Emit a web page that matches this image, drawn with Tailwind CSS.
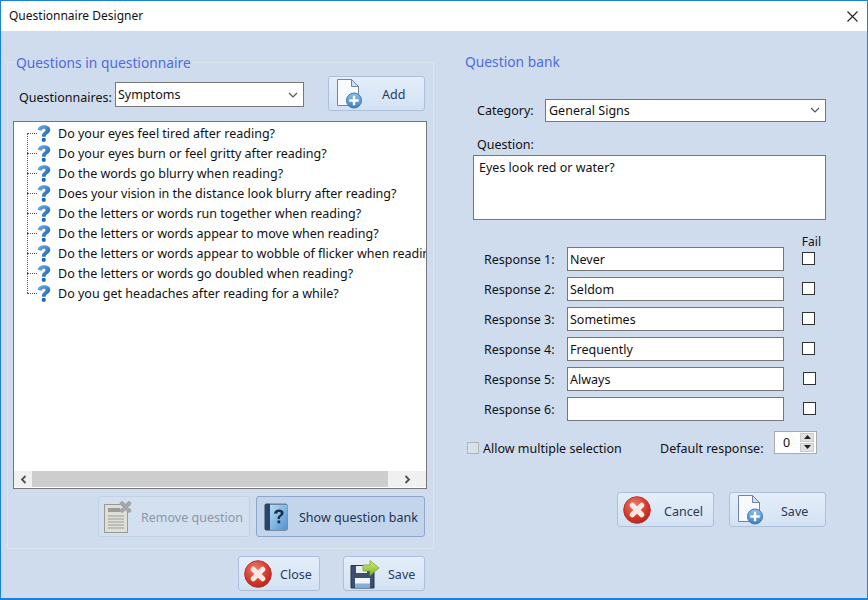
<!DOCTYPE html>
<html>
<head>
<meta charset="utf-8">
<title>Questionnaire Designer</title>
<script src="https://cdn.jsdelivr.net/npm/@tailwindcss/browser@4"></script>
</head>
<body class="m-0 overflow-hidden">
<!-- shared icons -->
<svg width="0" height="0" class="absolute">
  <defs>
    <linearGradient id="qblue" x1="0" y1="0" x2="1" y2="1"><stop offset="0" stop-color="#6fb0e6"/><stop offset="1" stop-color="#1b5fae"/></linearGradient>
    <radialGradient id="redball" cx="0.4" cy="0.3" r="0.8"><stop offset="0" stop-color="#ee7a68"/><stop offset="0.6" stop-color="#d2392c"/><stop offset="1" stop-color="#a92419"/></radialGradient>
    <linearGradient id="plusblue" x1="0" y1="0" x2="0" y2="1"><stop offset="0" stop-color="#8fc0ea"/><stop offset="1" stop-color="#3c7fc2"/></linearGradient>
    <linearGradient id="bookblue" x1="0" y1="0" x2="1" y2="1"><stop offset="0" stop-color="#b7daf5"/><stop offset="1" stop-color="#4d92cf"/></linearGradient>
    <linearGradient id="arrowgreen" x1="0" y1="0" x2="0" y2="1"><stop offset="0" stop-color="#d5ec7c"/><stop offset="1" stop-color="#7fb52a"/></linearGradient>
    <symbol id="q" viewBox="0 0 14 17">
      <path d="M.6 4.800C1.200 1.700 3.900.3 7 .3c3.400 0 6.300 1.600 6.300 4.500 0 2.200-1.500 3.300-3 4.300-1.100.8-1.600 1.300-1.600 2.600H4.900c-.1-2.300.6-3.400 2-4.500 1-.8 1.600-1.300 1.600-2.100 0-.9-.7-1.400-1.700-1.400-1.200 0-1.900.7-2.100 2z" fill="url(#qblue)"/>
      <rect x="4.800" y="12.900" width="3.900" height="3.800" rx="1.100" fill="#1f66b5"/>
    </symbol>
    <symbol id="newfile" viewBox="0 0 27 30">
      <path d="M1.500.5H15.500L22.500 7.500V26.500H1.500z" fill="#f7faff" stroke="#6f83ad"/>
      <path d="M15.500.5V7.500H22.500z" fill="#d3deee" stroke="#6f83ad"/>
      <circle cx="18" cy="21.500" r="7.500" fill="url(#plusblue)" stroke="#3f74ad"/>
      <path d="M18 16.800v9.400M13.300 21.500h9.400" stroke="#fff" stroke-width="2.400"/>
    </symbol>
    <symbol id="cancel" viewBox="0 0 30 30">
      <circle cx="15" cy="15" r="14.300" fill="url(#redball)" stroke="#b5352b"/>
      <path d="M10 10l10 10M20 10L10 20" stroke="#f8e8e4" stroke-width="5.600" stroke-linecap="round"/>
    </symbol>
    <symbol id="floppy" viewBox="0 0 30 30">
      <path d="M1 6.500H20L24 10V29H1z" fill="#3d4f6e" stroke="#26344c"/>
      <rect x="6" y="7" width="11" height="7" fill="#e8edf3"/>
      <rect x="5" y="19" width="15" height="9.500" fill="#f0f4f8"/>
      <rect x="5" y="24.500" width="15" height="4" fill="#7eb0dc"/>
      <path d="M13 6H20V1.500L29 9 20 16.500V12H13z" fill="url(#arrowgreen)" stroke="#7aa52e" stroke-width=".8"/>
    </symbol>
  </defs>
</svg>

<div class="w-[868px] h-[600px] flex flex-col bg-[#cfdcee] border-x border-b-2 border-[#1a82dc] text-[12.5px] leading-none text-[#111] font-['Noto_Sans','Open_Sans',sans-serif]">
  <!-- title bar -->
  <div class="h-[31px] shrink-0 bg-white flex items-center justify-between pl-[8px] pr-[9px] border-t border-[#1a82dc]">
    <span class="text-[#111] text-[12px]">Questionnaire Designer</span>
    <svg width="11" height="11" viewBox="0 0 11 11"><path d="M.5.500l10 10M10.500.500l-10 10" stroke="#222" stroke-width="1.100"/></svg>
  </div>

  <div class="flex flex-1 min-h-0">
    <!-- left side -->
    <div class="w-[439px] shrink-0 pl-[6px] pr-[15px] pt-[31px]">
      <div class="relative w-[427px] h-[487px] border border-[#dbe3ec] pt-[13px] pl-[5px] pr-[6px]">
        <span class="absolute left-[7px] -top-[7px] px-[1px] bg-[#cfdcee] text-[13.8px] text-[#4f6bd8]">Questions in questionnaire</span>
        <div class="flex items-start pl-[6px]">
          <span class="mt-[16px] w-[96px]">Questionnaires:</span>
          <div class="mt-[6px] w-[189px] h-[25px] bg-white border border-[#777] flex items-center justify-between pl-[2px] pr-[5px]">
            <span class="mt-[2px]">Symptoms</span>
            <svg width="10" height="6" viewBox="0 0 10 6"><path d="M1 1l4 4 4-4" fill="none" stroke="#555" stroke-width="1.200"/></svg>
          </div>
          <button class="ml-[24px] w-[97px] h-[35px] rounded-[3px] border border-[#aebfd9] bg-linear-to-b from-[#e4eefa] to-[#d3e2f3] flex items-center pl-[7px] text-[#2b3a5a]">
            <svg width="27" height="30"><use href="#newfile"/></svg>
            <span class="ml-[19px] mt-[4px]">Add</span>
          </button>
        </div>

        <!-- question tree -->
        <div class="relative mt-[10px] h-[368px] bg-white border border-[#777] overflow-hidden">
          <div class="relative pt-[1px] pl-[13px] h-[349px] overflow-hidden">
            <div class="absolute left-[13px] top-[11px] h-[160px] border-l border-dotted border-[#555]"></div>
            <ul class="whitespace-nowrap">
              <li class="flex items-center h-[20px]"><i class="shrink-0 w-[10px] border-t border-dotted border-[#555]"></i><svg class="shrink-0" width="14" height="17"><use href="#q"/></svg><span class="ml-[7px] mt-[2px]">Do your eyes feel tired after reading?</span></li>
              <li class="flex items-center h-[20px]"><i class="shrink-0 w-[10px] border-t border-dotted border-[#555]"></i><svg class="shrink-0" width="14" height="17"><use href="#q"/></svg><span class="ml-[7px] mt-[2px]">Do your eyes burn or feel gritty after reading?</span></li>
              <li class="flex items-center h-[20px]"><i class="shrink-0 w-[10px] border-t border-dotted border-[#555]"></i><svg class="shrink-0" width="14" height="17"><use href="#q"/></svg><span class="ml-[7px] mt-[2px]">Do the words go blurry when reading?</span></li>
              <li class="flex items-center h-[20px]"><i class="shrink-0 w-[10px] border-t border-dotted border-[#555]"></i><svg class="shrink-0" width="14" height="17"><use href="#q"/></svg><span class="ml-[7px] mt-[2px]">Does your vision in the distance look blurry after reading?</span></li>
              <li class="flex items-center h-[20px]"><i class="shrink-0 w-[10px] border-t border-dotted border-[#555]"></i><svg class="shrink-0" width="14" height="17"><use href="#q"/></svg><span class="ml-[7px] mt-[2px]">Do the letters or words run together when reading?</span></li>
              <li class="flex items-center h-[20px]"><i class="shrink-0 w-[10px] border-t border-dotted border-[#555]"></i><svg class="shrink-0" width="14" height="17"><use href="#q"/></svg><span class="ml-[7px] mt-[2px]">Do the letters or words appear to move when reading?</span></li>
              <li class="flex items-center h-[20px]"><i class="shrink-0 w-[10px] border-t border-dotted border-[#555]"></i><svg class="shrink-0" width="14" height="17"><use href="#q"/></svg><span class="ml-[7px] mt-[2px]">Do the letters or words appear to wobble of flicker when reading?</span></li>
              <li class="flex items-center h-[20px]"><i class="shrink-0 w-[10px] border-t border-dotted border-[#555]"></i><svg class="shrink-0" width="14" height="17"><use href="#q"/></svg><span class="ml-[7px] mt-[2px]">Do the letters or words go doubled when reading?</span></li>
              <li class="flex items-center h-[20px]"><i class="shrink-0 w-[10px] border-t border-dotted border-[#555]"></i><svg class="shrink-0" width="14" height="17"><use href="#q"/></svg><span class="ml-[7px] mt-[2px]">Do you get headaches after reading for a while?</span></li>
            </ul>
          </div>
          <!-- scrollbar -->
          <div class="flex items-center h-[16px] bg-[#f0f0f0]">
            <div class="w-[18px] flex justify-center"><svg width="7" height="9" viewBox="0 0 7 9"><path d="M5.500 1l-3.500 3.500 3.500 3.500" fill="none" stroke="#505050" stroke-width="1.800"/></svg></div>
            <div class="w-[356px] h-full bg-[#cdcdcd]"></div>
            <div class="flex-1 flex justify-center"><svg width="7" height="9" viewBox="0 0 7 9"><path d="M1.500 1l3.500 3.500-3.500 3.500" fill="none" stroke="#505050" stroke-width="1.800"/></svg></div>
          </div>
        </div>

        <div class="flex justify-end gap-[6px] mt-[7px] pr-[2px]">
          <button class="w-[152px] h-[41px] rounded-[3px] border border-[#c2d2e4] bg-[#d2e0f0] flex items-center pl-[4px] text-[#8d97a8]">
            <svg width="29" height="34" viewBox="0 0 29 34">
              <rect x="1.500" y="4.500" width="23" height="28" fill="#dfdfda" stroke="#9a9a94"/>
              <rect x="5" y="8" width="12" height="4" fill="#9c9c98"/>
              <path d="M5 16h16M5 19h16M5 22h16M5 25h16M5 28h16" stroke="#9c9c98"/>
              <path d="M19 3.500l7 7M26 3.500l-7 7" stroke="#a2a6aa" stroke-width="4.500" stroke-linecap="round"/>
            </svg>
            <span class="ml-[9px] mt-[4px]">Remove question</span>
          </button>
          <button class="w-[169px] h-[41px] rounded-[3px] border border-[#8fa5c9] bg-[#c2d5ea] flex items-center pl-[7px] text-[#233258]">
            <svg width="24" height="28" viewBox="0 0 24 28">
              <rect x="0.500" y="0.500" width="23" height="27" rx="2" fill="#2d4468"/>
              <rect x="6" y="2" width="17.500" height="25" fill="url(#bookblue)"/>
              <path d="M6 1h17" stroke="#a8c8e4"/>
              <path d="M10 10.500c.3-2.800 2.500-4 5-4 2.800 0 4.600 1.400 4.600 3.600 0 1.800-1.200 2.600-2.400 3.500-1 .6-1.200 1.200-1.200 2.300h-2.400c-.1-1.900.5-2.800 1.700-3.600 1-.7 1.500-1.200 1.500-2 0-.9-.7-1.400-1.800-1.400-1.200 0-1.800.6-2 1.900z" fill="#1d2d4c"/>
              <rect x="13.500" y="17.500" width="2.700" height="2.800" fill="#1d2d4c"/>
            </svg>
            <span class="ml-[11px] mt-[4px]">Show question bank</span>
          </button>
        </div>
      </div>
      <div class="flex justify-end gap-[23px] mt-[7px]">
        <button class="w-[82px] h-[35px] rounded-[3px] border border-[#aebfd9] bg-linear-to-b from-[#e4eefa] to-[#d3e2f3] flex items-center pl-[5px] text-[#2b3a5a]">
          <svg width="28" height="28"><use href="#cancel"/></svg>
          <span class="ml-[8px] mt-[4px]">Close</span>
        </button>
        <button class="w-[82px] h-[35px] rounded-[3px] border border-[#aebfd9] bg-linear-to-b from-[#e4eefa] to-[#d3e2f3] flex items-center pl-[6px] text-[#2b3a5a]">
          <svg width="30" height="30"><use href="#floppy"/></svg>
          <span class="ml-[8px] mt-[4px]">Save</span>
        </button>
      </div>
    </div>

    <!-- right side -->
    <div class="flex-1 pt-[24px] pl-[25px] pr-[41px]">
      <h2 class="text-[13.8px] text-[#4f6bd8] font-normal">Question bank</h2>
      <div class="flex items-center mt-[30px] pl-[12px]">
        <span class="w-[68px] mt-[2px]">Category:</span>
        <div class="w-[281px] h-[23px] bg-white border border-[#777] flex items-center justify-between pl-[3px] pr-[5px]">
          <span class="mt-[2px]">General Signs</span>
          <svg width="10" height="6" viewBox="0 0 10 6"><path d="M1 1l4 4 4-4" fill="none" stroke="#555" stroke-width="1.200"/></svg>
        </div>
      </div>
      <div class="mt-[17px] pl-[12px]">Question:</div>
      <div class="mt-[4px] ml-[8px] w-[353px] h-[65px] bg-white border border-[#777] pl-[5px] pt-[6px]">Eyes look red or water?</div>

      <div class="flex justify-end pr-[5px] mt-[16px] text-[12px]">Fail</div>
      <div class="-mt-[1px] flex flex-col gap-[6px] pl-[19px]">
        <div class="flex items-center h-[24px]"><span class="w-[83px] mt-[2px]">Response 1:</span><span class="w-[217px] h-[24px] bg-white border border-[#777] flex items-center pl-[2px] pt-[2px]">Never</span><i class="ml-[18px] mb-[2px] w-[13px] h-[13px] bg-white border border-[#333]"></i></div>
        <div class="flex items-center h-[24px]"><span class="w-[83px] mt-[2px]">Response 2:</span><span class="w-[217px] h-[24px] bg-white border border-[#777] flex items-center pl-[2px] pt-[2px]">Seldom</span><i class="ml-[18px] mb-[2px] w-[13px] h-[13px] bg-white border border-[#333]"></i></div>
        <div class="flex items-center h-[24px]"><span class="w-[83px] mt-[2px]">Response 3:</span><span class="w-[217px] h-[24px] bg-white border border-[#777] flex items-center pl-[2px] pt-[2px]">Sometimes</span><i class="ml-[18px] mb-[2px] w-[13px] h-[13px] bg-white border border-[#333]"></i></div>
        <div class="flex items-center h-[24px]"><span class="w-[83px] mt-[2px]">Response 4:</span><span class="w-[217px] h-[24px] bg-white border border-[#777] flex items-center pl-[2px] pt-[2px]">Frequently</span><i class="ml-[18px] mb-[2px] w-[13px] h-[13px] bg-white border border-[#333]"></i></div>
        <div class="flex items-center h-[24px]"><span class="w-[83px] mt-[2px]">Response 5:</span><span class="w-[217px] h-[24px] bg-white border border-[#777] flex items-center pl-[2px] pt-[2px]">Always</span><i class="ml-[19px] mb-[2px] w-[13px] h-[13px] bg-white border border-[#333]"></i></div>
        <div class="flex items-center h-[24px]"><span class="w-[83px] mt-[2px]">Response 6:</span><span class="w-[217px] h-[24px] bg-white border border-[#777] flex items-center pl-[2px] pt-[2px]"></span><i class="ml-[19px] mb-[2px] w-[13px] h-[13px] bg-white border border-[#333]"></i></div>
      </div>

      <div class="flex items-center mt-[9px] pl-[2px] h-[24px]">
        <i class="mt-[11px] w-[12px] h-[12px] bg-[#d9e0e8] border border-[#b0b5bb]"></i>
        <span class="mt-[13px] ml-[4px] w-[177px]">Allow multiple selection</span>
        <span class="mt-[13px] w-[114px]">Default response:</span>
        <div class="w-[43px] h-[23px] bg-white border border-[#aaa] flex items-center justify-between pr-[2px]">
          <span class="pl-[8px] mt-[2px]">0</span>
          <div class="flex flex-col gap-[1px]">
            <div class="w-[14px] h-[9px] bg-[#e1e1e1] border border-[#ccc] flex items-center justify-center"><svg width="7" height="4" viewBox="0 0 7 4"><path d="M3.500 0L7 4H0z" fill="#222"/></svg></div>
            <div class="w-[14px] h-[9px] bg-[#e1e1e1] border border-[#ccc] flex items-center justify-center"><svg width="7" height="4" viewBox="0 0 7 4"><path d="M0 0H7L3.500 4z" fill="#222"/></svg></div>
          </div>
        </div>
      </div>

      <div class="flex justify-end gap-[15px] mt-[38px]">
        <button class="w-[97px] h-[35px] rounded-[3px] border border-[#aebfd9] bg-linear-to-b from-[#e4eefa] to-[#d3e2f3] flex items-center pl-[5px] text-[#2b3a5a]">
          <svg width="28" height="28"><use href="#cancel"/></svg>
          <span class="ml-[13px] mt-[4px]">Cancel</span>
        </button>
        <button class="w-[97px] h-[35px] rounded-[3px] border border-[#aebfd9] bg-linear-to-b from-[#e4eefa] to-[#d3e2f3] flex items-center pl-[7px] text-[#2b3a5a]">
          <svg width="27" height="30"><use href="#newfile"/></svg>
          <span class="ml-[17px] mt-[4px]">Save</span>
        </button>
      </div>
    </div>
  </div>
</div>
</body>
</html>
